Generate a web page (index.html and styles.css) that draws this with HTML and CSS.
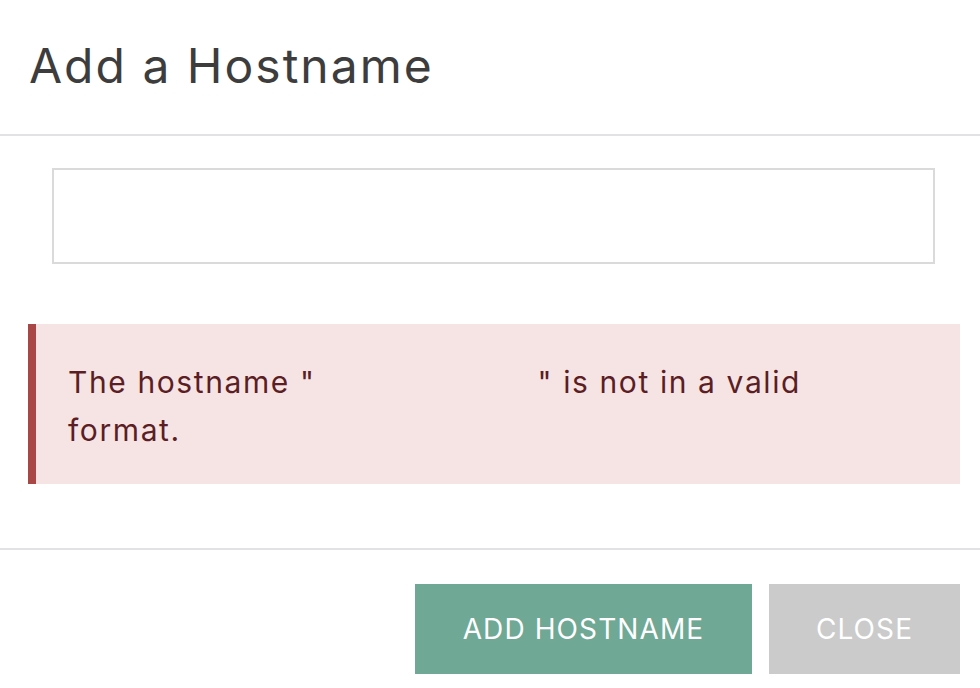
FILE: index.html
```html
<!DOCTYPE html>
<html lang="en">
<head>
<meta charset="utf-8">
<title>Add a Hostname</title>
<link rel="stylesheet" href="styles.css">
</head>
<body>
<div class="modal">
  <div class="modal-header">
    <h1 class="modal-title">Add a Hostname</h1>
  </div>
  <div class="modal-body">
    <input class="hostname-input" type="text" value="">
    <div class="alert">The hostname "<span class="hostname-gap"></span>" is not in a valid format.</div>
  </div>
  <div class="modal-footer">
    <button class="btn btn-primary" type="button">Add Hostname</button>
    <button class="btn btn-close" type="button">Close</button>
  </div>
</div>
</body>
</html>
```
FILE: styles.css
```css
* { box-sizing: border-box; }
html, body { margin: 0; padding: 0; background: #fff; }
body { font-family: Inter, "Open Sans", sans-serif; color: #3b3b3b; }
.modal { width: 980px; height: 688px; display: flex; flex-direction: column; }
.modal-header {
  height: 136px;
  border-bottom: 2px solid #e2e2e4;
  display: flex;
  align-items: center;
  padding: 0 0 4px 29px;
}
.modal-title {
  margin: 0;
  font-size: 48px;
  font-weight: 400;
  letter-spacing: 2px;
  color: #3d3d3d;
}
.modal-body {
  padding: 32px 20px 64px 28px;
  display: flex;
  flex-direction: column;
  border-bottom: 2px solid #e2e2e4;
}
.hostname-input {
  margin: 0 25px 0 24px;
  height: 96px;
  border: 2px solid #dadada;
  background: #fff;
  outline: none;
  font: inherit;
}
.alert {
  margin-top: 60px;
  height: 160px;
  background: #f6e4e4;
  border-left: 8px solid #a94646;
  padding: 34px 100px 0 32px;
  font-size: 30px;
  line-height: 48px;
  letter-spacing: 1.6px;
  color: #5b1e24;
}
.hostname-gap { display: inline-block; width: 222px; }
.modal-footer {
  flex: 1;
  display: flex;
  justify-content: flex-end;
  align-items: flex-start;
  gap: 17px;
  padding: 34px 20px 0 0;
}
.btn {
  height: 90px;
  border: 0;
  font-family: inherit;
  font-size: 28px;
  letter-spacing: 1.1px;
  text-transform: uppercase;
  color: #fff;
  cursor: pointer;
  padding: 0;
}
.btn-primary { width: 337px; background: #6fa894; }
.btn-close { width: 191px; background: #cbcbcb; }
```
